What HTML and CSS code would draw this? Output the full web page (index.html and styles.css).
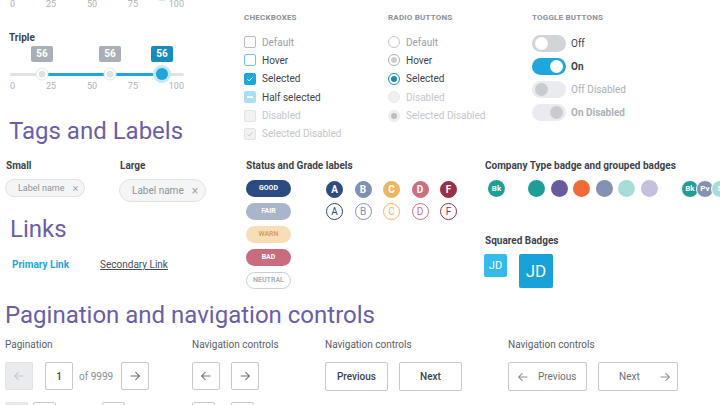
FILE: index.html
```html
<!DOCTYPE html>
<html lang="en">
  <head>
    <meta charset="UTF-8" />
    <meta name="viewport" content="width=device-width, initial-scale=1.0" />
    <title>UI Kit</title>
    <link rel="stylesheet" href="styles.css">
  </head>
  <body>
    <div class="page">
      <!-- sliders + form controls -->
      <section class="row-top">
        <div class="col-sliders">
          <div class="slider slider-cut">
            <div class="track">
              <div class="fill" style="left:57.5%;width:29.9%"></div>
              <span class="thumb" style="left:57.5%"></span>
              <span class="thumb active" style="left:87.4%"></span>
            </div>
            <div class="ticks"><span>0</span><span>25</span><span>50</span><span>75</span><span>100</span></div>
          </div>

          <div class="slider slider-triple">
            <div class="slider-title">Triple</div>
            <div class="tips">
              <span class="tip" style="left:18.4%">56</span>
              <span class="tip" style="left:57.5%">56</span>
              <span class="tip active" style="left:87.4%">56</span>
            </div>
            <div class="track">
              <div class="fill" style="left:18.4%;width:69%"></div>
              <span class="thumb" style="left:18.4%"></span>
              <span class="thumb" style="left:57.5%"></span>
              <span class="thumb active" style="left:87.4%"></span>
            </div>
            <div class="ticks"><span>0</span><span>25</span><span>50</span><span>75</span><span>100</span></div>
          </div>

          <h2 class="heading heading-tags">Tags and Labels</h2>
        </div>

        <div class="col-options">
          <div class="group-title">Checkboxes</div>
          <ul class="option-list">
            <li class="option muted"><span class="checkbox"></span>Default</li>
            <li class="option"><span class="checkbox hover"></span>Hover</li>
            <li class="option"><span class="checkbox checked">
              <svg viewBox="0 0 12 12"><path d="M3 6.3l2 2 4-4.3" /></svg>
            </span>Selected</li>
            <li class="option"><span class="checkbox half"><i></i></span>Half selected</li>
            <li class="option disabled"><span class="checkbox off"></span>Disabled</li>
            <li class="option disabled"><span class="checkbox off">
              <svg viewBox="0 0 12 12"><path d="M3 6.3l2 2 4-4.3" /></svg>
            </span>Selected Disabled</li>
          </ul>
        </div>

        <div class="col-options">
          <div class="group-title">Radio buttons</div>
          <ul class="option-list">
            <li class="option muted"><span class="radio"></span>Default</li>
            <li class="option"><span class="radio hover"></span>Hover</li>
            <li class="option"><span class="radio checked"></span>Selected</li>
            <li class="option disabled"><span class="radio off"></span>Disabled</li>
            <li class="option disabled"><span class="radio off dot"></span>Selected Disabled</li>
          </ul>
        </div>

        <div class="col-options">
          <div class="group-title">Toggle buttons</div>
          <ul class="toggle-list">
            <li class="toggle-row"><span class="toggle"></span>Off</li>
            <li class="toggle-row strong"><span class="toggle on"></span>On</li>
            <li class="toggle-row disabled"><span class="toggle off"></span>Off Disabled</li>
            <li class="toggle-row strong disabled"><span class="toggle on off"></span>On Disabled</li>
          </ul>
        </div>
      </section>

      <!-- tags, status, badges -->
      <section class="row-mid">
        <div class="col-tags">
          <div class="tag-groups">
            <div class="tag-group tag-group-small">
              <div class="sub-title">Small</div>
              <span class="tag">Label name <span class="tag-x">×</span></span>
            </div>
            <div class="tag-group">
              <div class="sub-title">Large</div>
              <span class="tag tag-lg">Label name <span class="tag-x">×</span></span>
            </div>
          </div>

          <h2 class="heading heading-links">Links</h2>
          <div class="links">
            <a class="link-primary" href="#">Primary Link</a>
            <a class="link-secondary" href="#">Secondary Link</a>
          </div>
        </div>

        <div class="col-status">
          <div class="sub-title">Status and Grade labels</div>
          <div class="status-body">
            <div class="pills">
              <span class="pill good">Good</span>
              <span class="pill fair">Fair</span>
              <span class="pill warn">Warn</span>
              <span class="pill bad">Bad</span>
              <span class="pill neutral">Neutral</span>
            </div>
            <div class="grades">
              <span class="grade g-a">A</span>
              <span class="grade g-b">B</span>
              <span class="grade g-c">C</span>
              <span class="grade g-d">D</span>
              <span class="grade g-f">F</span>
              <span class="grade outline g-a">A</span>
              <span class="grade outline g-b">B</span>
              <span class="grade outline g-c">C</span>
              <span class="grade outline g-d">D</span>
              <span class="grade outline g-f">F</span>
            </div>
          </div>
        </div>

        <div class="col-badges">
          <div class="sub-title">Company Type badge and grouped badges</div>
          <div class="badge-row">
            <span class="badge c-teal">Bk</span>
            <div class="dots">
              <span class="badge c-teal"></span>
              <span class="badge c-purple"></span>
              <span class="badge c-orange"></span>
              <span class="badge c-slate"></span>
              <span class="badge c-mint"></span>
              <span class="badge c-lav"></span>
            </div>
            <div class="badge-group">
              <span class="badge c-teal">Bk</span>
              <span class="badge c-slate">Pv</span>
              <span class="badge c-mint">S</span>
            </div>
          </div>

          <div class="sub-title squared-title">Squared Badges</div>
          <div class="squares">
            <span class="square">JD</span>
            <span class="square square-lg">JD</span>
          </div>
        </div>
      </section>

      <!-- pagination -->
      <section class="row-pages">
        <h2 class="heading heading-pages">Pagination and navigation controls</h2>
        <div class="pages-grid">
          <div class="ctrl-col">
            <div class="ctrl-label">Pagination</div>
            <div class="ctrl-row">
              <span class="box disabled">
                <svg viewBox="0 0 16 16"><path d="M13 8H3M7.5 3.5L3 8l4.5 4.5" /></svg>
              </span>
              <span class="box page-input">1</span>
              <span class="of">of 9999</span>
              <span class="box">
                <svg viewBox="0 0 16 16"><path d="M3 8h10M8.5 3.5L13 8l-4.5 4.5" /></svg>
              </span>
            </div>
            <div class="ctrl-row small">
              <span class="box disabled"></span>
              <span class="box page-input"></span>
              <span class="of"></span>
              <span class="box"></span>
            </div>
          </div>

          <div class="ctrl-col">
            <div class="ctrl-label">Navigation controls</div>
            <div class="ctrl-row gap-nav">
              <span class="box">
                <svg viewBox="0 0 16 16"><path d="M13 8H3M7.5 3.5L3 8l4.5 4.5" /></svg>
              </span>
              <span class="box">
                <svg viewBox="0 0 16 16"><path d="M3 8h10M8.5 3.5L13 8l-4.5 4.5" /></svg>
              </span>
            </div>
            <div class="ctrl-row small gap-nav-sm">
              <span class="box"></span>
              <span class="box"></span>
            </div>
          </div>

          <div class="ctrl-col">
            <div class="ctrl-label">Navigation controls</div>
            <div class="ctrl-row gap-nav">
              <button class="nav-btn">Previous</button>
              <button class="nav-btn">Next</button>
            </div>
          </div>

          <div class="ctrl-col">
            <div class="ctrl-label">Navigation controls</div>
            <div class="ctrl-row gap-nav">
              <button class="nav-btn wide prev">
                <svg viewBox="0 0 16 16"><path d="M13 8H3M7.5 3.5L3 8l4.5 4.5" /></svg>
                Previous
              </button>
              <button class="nav-btn wide next">
                Next
                <svg viewBox="0 0 16 16"><path d="M3 8h10M8.5 3.5L13 8l-4.5 4.5" /></svg>
              </button>
            </div>
          </div>
        </div>
      </section>
    </div>
  </body>
</html>
```

FILE: styles.css
```css
* {
  box-sizing: border-box;
  margin: 0;
  padding: 0;
}

html,
body {
  overflow: hidden;
  height: 100%;
}

body {
  font-family: Roboto, "Liberation Sans", sans-serif;
  font-size: 10px;
  color: #3e434b;
  background: #fff;
}

ul {
  list-style: none;
}

.heading {
  font-size: 24px;
  font-weight: 400;
  line-height: 28px;
  color: #6b5ea7;
}

.sub-title {
  font-size: 10px;
  font-weight: 700;
  line-height: 12px;
  color: #3e434b;
}

/* ---------- top row ---------- */

.row-top {
  display: grid;
  grid-template-columns: 244px 144px 144px 1fr;
}

.slider {
  margin-left: 10px;
  width: 174px;
}

.slider-cut {
  margin-top: -14px;
}

.slider-triple {
  margin-top: 22px;
}

.slider-title {
  font-size: 10px;
  font-weight: 700;
  line-height: 12px;
  color: #3e434b;
  margin-left: -1px;
}

.tips {
  position: relative;
  height: 16px;
  margin-top: 2px;
}

.tip {
  position: absolute;
  top: 0;
  width: 22px;
  height: 16px;
  transform: translateX(-50%);
  background: #a9afb7;
  border-radius: 2px;
  color: #fff;
  font-size: 10px;
  font-weight: 700;
  line-height: 16px;
  text-align: center;
}

.tip.active {
  background: #1a8bbd;
}

.track {
  position: relative;
  height: 12px;
  margin-top: 6px;
}

.slider-cut .track {
  margin-top: 0;
}

.track::before {
  content: "";
  position: absolute;
  left: 0;
  right: 0;
  top: 5px;
  height: 3px;
  border-radius: 2px;
  background: #dfe2e6;
}

.fill {
  position: absolute;
  top: 5px;
  height: 3px;
  background: #1ea7dd;
}

.thumb {
  position: absolute;
  top: 50%;
  width: 11px;
  height: 11px;
  border-radius: 50%;
  transform: translate(-50%, -50%);
  background: #dfe2e6;
  border: 2.5px solid #fff;
  box-shadow: 0 0 0 1px #e3e6e9;
}

.thumb.active {
  width: 12px;
  height: 12px;
  background: #1ea7dd;
  border: none;
  box-shadow: 0 0 0 3px #c3e8f7;
}

.ticks {
  display: flex;
  justify-content: space-between;
  font-size: 9px;
  line-height: 12px;
  color: #aeb3ba;
}

.heading-tags {
  margin-top: 25px;
  padding-left: 9px;
}

.group-title {
  margin-top: 12px;
  font-size: 8px;
  font-weight: 700;
  line-height: 12px;
  letter-spacing: 0.2px;
  text-transform: uppercase;
  color: #8b9099;
}

.option-list {
  margin-top: 11px;
  display: flex;
  flex-direction: column;
  gap: 4.4px;
}

.option {
  display: flex;
  align-items: center;
  gap: 6px;
  height: 14px;
  font-size: 10px;
  color: #3e434b;
}

.option.muted {
  color: #9aa0a8;
}

.option.disabled {
  color: #c3c7cd;
}

.checkbox {
  display: flex;
  align-items: center;
  justify-content: center;
  width: 12px;
  height: 12px;
  border: 1px solid #b6bbc2;
  border-radius: 2px;
  background: #fff;
}

.checkbox.hover {
  border-color: #6cc4ea;
}

.checkbox.checked {
  background: #1ea7dd;
  border-color: #1ea7dd;
}

.checkbox.half {
  background: #a9dff4;
  border-color: #a9dff4;
}

.checkbox.half i {
  display: block;
  width: 6px;
  height: 1.5px;
  background: #fff;
}

.checkbox.off {
  background: #f1f2f4;
  border-color: #e1e3e6;
}

.checkbox svg {
  width: 10px;
  height: 10px;
  fill: none;
  stroke: #fff;
  stroke-width: 1.2;
}

.checkbox.off svg {
  stroke: #c3c7cd;
}

.radio {
  position: relative;
  width: 12px;
  height: 12px;
  border: 1px solid #c4c8cd;
  border-radius: 50%;
  background: #fff;
}

.radio.hover::after,
.radio.checked::after,
.radio.dot::after {
  content: "";
  position: absolute;
  left: 2px;
  top: 2px;
  width: 6px;
  height: 6px;
  border-radius: 50%;
  background: #c9ccd1;
}

.radio.hover {
  border-color: #a9aeb5;
}

.radio.checked {
  border-color: #1a8bbd;
}

.radio.checked::after {
  background: #1a8bbd;
}

.radio.off {
  background: #eef0f2;
  border-color: #e8eaed;
}

.radio.dot::after {
  background: #b9bdc3;
}

.toggle-list {
  margin-top: 11px;
  display: flex;
  flex-direction: column;
  gap: 6px;
}

.toggle-row {
  display: flex;
  align-items: center;
  gap: 5px;
  height: 17px;
  font-size: 10px;
  color: #3e434b;
}

.toggle-row.strong {
  font-weight: 700;
}

.toggle-row.disabled {
  color: #acb1b8;
}

.toggle {
  position: relative;
  width: 34px;
  height: 17px;
  border-radius: 9px;
  background: #d1d4d9;
}

.toggle::after {
  content: "";
  position: absolute;
  left: 3px;
  top: 2px;
  width: 13px;
  height: 13px;
  border-radius: 50%;
  background: #fff;
}

.toggle.on {
  background: #1ea7dd;
}

.toggle.on::after {
  left: auto;
  right: 3px;
}

.toggle.off {
  background: #e9ebee;
}

.toggle.off::after {
  background: #c8cbd0;
}

/* ---------- middle row ---------- */

.row-mid {
  display: grid;
  grid-template-columns: 246px 239px 1fr;
  margin-top: 15px;
  height: 129px;
}

.tag-groups {
  display: flex;
  padding-left: 5px;
}

.tag-group-small {
  width: 114px;
}

.tag-group .sub-title {
  margin-left: 1px;
}

.tag {
  display: inline-flex;
  align-items: center;
  margin-top: 7px;
  height: 18px;
  width: 80px;
  padding-left: 12px;
  border: 1px solid #dfe2e6;
  border-radius: 9px;
  background: #f4f5f7;
  font-size: 9px;
  color: #8e939b;
}

.tag-lg {
  height: 23px;
  width: 87px;
  border-radius: 12px;
  font-size: 10px;
}

.tag-x {
  margin-left: 8px;
  font-size: 11px;
  color: #a4a9b0;
}

.tag-lg .tag-x {
  margin-left: 8px;
  font-size: 12px;
}

.heading-links {
  margin-top: 13px;
  padding-left: 10px;
}

.links {
  display: flex;
  gap: 31px;
  margin-top: 16px;
  padding-left: 12px;
  line-height: 12px;
}

.link-primary {
  font-weight: 700;
  color: #1ea7dd;
  text-decoration: none;
}

.link-secondary {
  color: #4a4f57;
  text-decoration: underline;
}

.status-body {
  display: flex;
  gap: 35px;
  margin-top: 8px;
}

.pills {
  display: flex;
  flex-direction: column;
  gap: 6px;
}

.pill {
  width: 45px;
  height: 17px;
  border-radius: 9px;
  font-size: 7px;
  font-weight: 700;
  line-height: 17px;
  text-align: center;
  text-transform: uppercase;
  color: #fff;
}

.pill.good {
  background: #2c4b80;
}

.pill.fair {
  background: #a8b5ca;
}

.pill.warn {
  background: #f8deb8;
  color: #dca15a;
}

.pill.bad {
  background: #c96d7e;
}

.pill.neutral {
  line-height: 15px;
  border: 1px solid #c8cedb;
  color: #a8b0c0;
}

.grades {
  display: grid;
  grid-template-columns: repeat(5, 17px);
  column-gap: 11.5px;
  row-gap: 5.5px;
  margin-top: 0.5px;
  align-content: start;
}

.grade {
  width: 17px;
  height: 17px;
  border-radius: 50%;
  border: 1px solid;
  font-size: 10px;
  font-weight: 700;
  line-height: 15px;
  text-align: center;
  color: #fff;
}

.grade.outline {
  background: #fff;
  font-weight: 400;
}

.g-a { background: #2c4b80; border-color: #2c4b80; }
.g-b { background: #8091b7; border-color: #8091b7; }
.g-c { background: #efb661; border-color: #efb661; }
.g-d { background: #cb6f81; border-color: #cb6f81; }
.g-f { background: #9a2f47; border-color: #9a2f47; }

.grade.outline.g-a { color: #2c4b80; }
.grade.outline.g-b { color: #8091b7; }
.grade.outline.g-c { color: #efb661; }
.grade.outline.g-d { color: #cb6f81; }
.grade.outline.g-f { color: #9a2f47; }

.badge-row {
  display: flex;
  align-items: center;
  margin-top: 7.5px;
  padding-left: 3px;
}

.badge {
  display: inline-flex;
  align-items: center;
  justify-content: center;
  width: 17px;
  height: 17px;
  border-radius: 50%;
  font-size: 8px;
  font-weight: 700;
  color: #fff;
  flex-shrink: 0;
}

.dots {
  display: flex;
  gap: 5.6px;
  margin-left: 23px;
}

.badge-group {
  display: flex;
  margin-left: 23px;
}

.badge-group .badge {
  width: 18px;
  height: 18px;
  border: 1.5px solid #fff;
  margin-right: -3px;
}

.c-teal { background: #1f9e95; }
.c-purple { background: #695b9f; }
.c-orange { background: #f26a37; }
.c-slate { background: #8491b2; }
.c-mint { background: #a6ddd9; }
.c-lav { background: #c5c1dc; }

.squared-title {
  margin-top: 37px;
}

.squares {
  display: flex;
  align-items: flex-start;
  gap: 12px;
  margin-top: 7px;
  margin-left: -1px;
}

.square {
  width: 23px;
  height: 23px;
  border-radius: 2px;
  background: #34bbec;
  color: #fff;
  font-size: 11px;
  line-height: 23px;
  text-align: center;
}

.square-lg {
  width: 34px;
  height: 34px;
  background: #18a2d8;
  font-size: 17px;
  line-height: 34px;
}

/* ---------- pagination ---------- */

.heading-pages {
  margin-top: 12px;
  padding-left: 5px;
}

.pages-grid {
  display: grid;
  grid-template-columns: 187px 133px 183px 1fr;
  margin-top: 10px;
  padding-left: 5px;
}

.ctrl-label {
  font-size: 10px;
  line-height: 12px;
  color: #5b6068;
}

.ctrl-row {
  display: flex;
  align-items: center;
  margin-top: 11px;
}

.ctrl-row.small {
  margin-top: 12px;
}

.box {
  display: flex;
  align-items: center;
  justify-content: center;
  width: 28px;
  height: 28px;
  border: 1px solid #c6cad0;
  border-radius: 2px;
  background: #fff;
  color: #6b7079;
  flex-shrink: 0;
}

.box svg,
.nav-btn svg {
  width: 14px;
  height: 14px;
  fill: none;
  stroke: currentColor;
  stroke-width: 1.2;
}

.box.disabled {
  background: #e9ebee;
  border-color: #dfe2e6;
  color: #c2c6cc;
}

.box.page-input {
  margin-left: 12px;
  font-weight: 500;
  color: #3e434b;
}

.of {
  margin-left: 6px;
  margin-right: 8px;
  color: #8a9099;
  white-space: nowrap;
}

.small .box {
  width: 23px;
  height: 23px;
}

.small .box.page-input {
  margin-left: 5px;
}

.small .of {
  width: 46px;
  margin: 0;
}

.gap-nav {
  gap: 11px;
}

.gap-nav-sm {
  gap: 16px;
}

.nav-btn {
  width: 63px;
  height: 29px;
  border: 1px solid #c6cad0;
  border-radius: 2px;
  background: #fff;
  font-family: inherit;
  font-size: 10px;
  font-weight: 500;
  color: #3e434b;
}

.nav-btn.wide {
  display: flex;
  align-items: center;
  width: 79px;
  font-weight: 400;
  color: #6b7079;
}

.nav-btn.wide svg {
  color: #8a9099;
}

.nav-btn.prev {
  padding-left: 7px;
  gap: 8px;
}

.nav-btn.next {
  width: 80px;
  padding-left: 20px;
  gap: 18px;
}
```
